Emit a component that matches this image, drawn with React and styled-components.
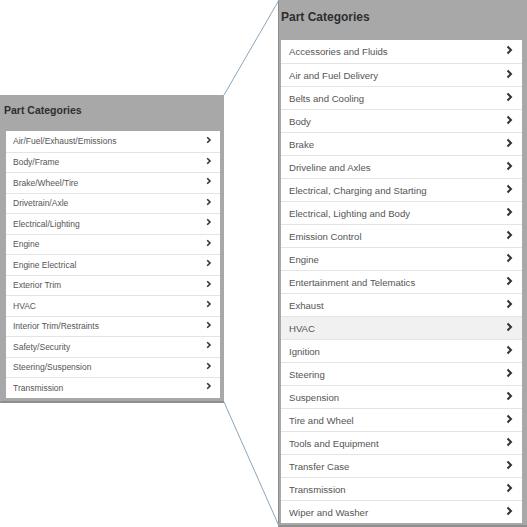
import React from "react";
import styled, { createGlobalStyle } from "styled-components";

const Global = createGlobalStyle`
  html, body { margin: 0; padding: 0; background: #fff; }
  body { font-family: "Liberation Sans", Arial, sans-serif; }
`;

const Canvas = styled.div`
  position: relative;
  width: 527px;
  height: 527px;
  overflow: hidden;
  display: flex;
  align-items: flex-start;
  gap: 54px;
`;

const Panel = styled.div`
  flex: none;
  width: ${(p) => p.$w}px;
  margin-top: ${(p) => p.$top}px;
  background: #a8a8a8;
  border-left: 1px solid ${(p) => (p.$edge ? "#8a8a8a" : "#a8a8a8")};
  border-bottom: 2px solid #8e8e8e;
  padding: 0 ${(p) => p.$padR}px ${(p) => p.$padB}px ${(p) => p.$padL}px;
  box-sizing: border-box;
`;

const Header = styled.div`
  height: ${(p) => p.$h}px;
  padding-top: ${(p) => p.$pt}px;
  margin-left: ${(p) => p.$indent}px;
  font-weight: bold;
  font-size: ${(p) => p.$fs}px;
  line-height: 1;
  color: #2e2e2e;
  box-sizing: border-box;
`;

const List = styled.ul`
  list-style: none;
  margin: 0;
  padding: 0;
  background: #fff;
  border-radius: 2px;
`;

const Row = styled.li`
  height: ${(p) => p.$h}px;
  display: flex;
  align-items: center;
  justify-content: space-between;
  padding: 0 ${(p) => p.$padR}px 0 ${(p) => p.$padL}px;
  border-top: 1px solid #e4e4e4;
  box-sizing: border-box;
  font-size: ${(p) => p.$fs}px;
  color: #555;
  background: ${(p) => (p.$hl ? "#f1f1f1" : "#fff")};
  &:first-child { border-top: none; }
`;

const Arrow = styled.span`
  display: block;
  margin-top: -3px;
`;

const Lines = styled.svg`
  position: absolute;
  left: 0;
  top: 0;
  pointer-events: none;
`;

const Chevron = ({ s }) => (
  <Arrow>
    <svg width={s * 0.7} height={s} viewBox="0 0 7 10" style={{ display: "block" }}>
      <path d="M1.5 1.5 L5 5 L1.5 8.5" fill="none" stroke="#333" strokeWidth="2" />
    </svg>
  </Arrow>
);

const left = [
  "Air/Fuel/Exhaust/Emissions",
  "Body/Frame",
  "Brake/Wheel/Tire",
  "Drivetrain/Axle",
  "Electrical/Lighting",
  "Engine",
  "Engine Electrical",
  "Exterior Trim",
  "HVAC",
  "Interior Trim/Restraints",
  "Safety/Security",
  "Steering/Suspension",
  "Transmission",
];

const right = [
  "Accessories and Fluids",
  "Air and Fuel Delivery",
  "Belts and Cooling",
  "Body",
  "Brake",
  "Driveline and Axles",
  "Electrical, Charging and Starting",
  "Electrical, Lighting and Body",
  "Emission Control",
  "Engine",
  "Entertainment and Telematics",
  "Exhaust",
  "HVAC",
  "Ignition",
  "Steering",
  "Suspension",
  "Tire and Wheel",
  "Tools and Equipment",
  "Transfer Case",
  "Transmission",
  "Wiper and Washer",
];

export default function App() {
  return (
    <>
      <Global />
      <Canvas>
        <Panel $w={224} $top={95} $padL={5} $padR={4} $padB={3}>
          <Header $h={36} $pt={10} $fs={10.5} $indent={-2}>Part Categories</Header>
          <List>
            {left.map((t) => (
              <Row key={t} $h={20.5} $fs={8.5} $padL={7} $padR={8}>
                <span>{t}</span>
                <Chevron s={8} />
              </Row>
            ))}
          </List>
        </Panel>
        <Panel $w={249} $top={0} $edge $padL={2} $padR={5} $padB={2}>
          <Header $h={40} $pt={11} $fs={12} $indent={0}>Part Categories</Header>
          <List>
            {right.map((t) => (
              <Row key={t} $h={23} $fs={9.6} $padL={8} $padR={9} $hl={t === "HVAC"}>
                <span>{t}</span>
                <Chevron s={10} />
              </Row>
            ))}
          </List>
        </Panel>
        <Lines width="527" height="527">
          <line x1="224" y1="95" x2="279" y2="0" stroke="#8aa6bd" strokeWidth="1" />
          <line x1="224" y1="402" x2="279" y2="526" stroke="#8aa6bd" strokeWidth="1" />
        </Lines>
      </Canvas>
    </>
  );
}
